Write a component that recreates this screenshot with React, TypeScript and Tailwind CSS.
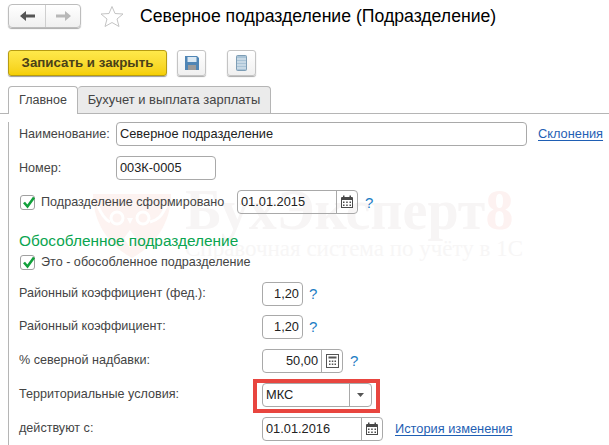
import type { ReactNode } from "react";

const border = "border border-[#a9a9a9] rounded-[4px]";

function Help({ className = "" }: { className?: string }) {
  return <span className={`text-[#1c7dc4] text-[15px] leading-none ${className}`}>?</span>;
}

function CalendarIcon() {
  return (
    <svg width="14" height="14" viewBox="0 0 14 14">
      <path d="M2 2h10a1 1 0 0 1 1 1v10H1V3a1 1 0 0 1 1-1z" fill="#4a4a4a" />
      <rect x="3" y="0.5" width="1.5" height="3" fill="#4a4a4a" />
      <rect x="9.5" y="0.5" width="1.5" height="3" fill="#4a4a4a" />
      <rect x="2" y="5" width="10" height="7" fill="#fff" />
      <path d="M3 6.5h1.5V8H3zM6.2 6.5h1.5V8H6.2zM9.5 6.5H11V8H9.5zM3 9.5h1.5V11H3zM6.2 9.5h1.5V11H6.2zM9.5 9.5H11V11H9.5z" fill="#4a4a4a" />
    </svg>
  );
}

function CalcIcon() {
  return (
    <svg width="13" height="14" viewBox="0 0 13 14">
      <rect x="0.5" y="0.5" width="12" height="13" fill="#fff" stroke="#555" />
      <rect x="2.5" y="2.5" width="8" height="2" fill="#555" />
      <path d="M3 6.5h1.5V8H3zM5.8 6.5h1.5V8H5.8zM8.5 6.5H10V8H8.5zM3 9.5h1.5V11H3zM5.8 9.5h1.5V11H5.8zM8.5 9.5H10V11H8.5z" fill="#555" />
    </svg>
  );
}

function Check() {
  return (
    <span className="w-[15px] h-[15px] border border-[#a0a0a0] rounded-[3px] bg-white/70 shrink-0 relative">
      <svg width="17" height="15" viewBox="0 0 17 15" className="absolute left-0 -top-[1px]">
        <path d="M3 7.5 L6.5 11.5 L13 2.5" fill="none" stroke="#12a03c" strokeWidth="2.6" />
      </svg>
    </span>
  );
}

function Field({ w, value, right, btn, children }: { w: string; value: string; right?: boolean; btn?: string; children?: ReactNode }) {
  return (
    <div className={`${w} ${border} h-[24px] flex text-[12.8px] text-[#222] shrink-0`}>
      <span className={`flex-1 px-[3px] leading-[22px] ${right ? "text-right" : ""}`}>{value}</span>
      {children && (
        <span className={`${btn} border-l border-[#a9a9a9] flex items-center justify-center`}>{children}</span>
      )}
    </div>
  );
}

function Row({ label, labelW, mt, children }: { label: string; labelW: string; mt: string; children: ReactNode }) {
  return (
    <div className={`flex items-center ${mt}`}>
      <span className={`${labelW} text-[#444]`}>{label}</span>
      {children}
    </div>
  );
}

export default function App() {
  return (
    <div className="w-[609px] h-[445px] overflow-hidden bg-white relative text-[12.6px] font-['Liberation_Sans',Arial,sans-serif]">
      {/* watermark */}
      <div className="absolute left-[92px] top-[192px] flex gap-[13px] pointer-events-none">
        <svg width="80" height="67" viewBox="0 0 80 67">
          <path d="M1 2 H79 C79 32 62 54 40 66 C18 54 1 32 1 2z" fill="#fdf3f1" />
          <circle cx="25" cy="26" r="6" fill="none" stroke="#fff" strokeWidth="3" />
          <circle cx="51" cy="26" r="6" fill="none" stroke="#fff" strokeWidth="3" />
          <path d="M6 14 C10 24 14 28 18 30 M74 14 C70 24 66 28 58 30" fill="none" stroke="#fff" strokeWidth="3" />
          <path d="M35 26 L38 32 L41 26z" fill="#fff" />
          <path d="M38 38 L32 46 L38 56 L44 46z" fill="#fff" />
        </svg>
        <div className="font-['Liberation_Serif',serif] -mt-[7px]">
          <div className="text-[56px] font-bold leading-[50px] text-[#f7f5f5] whitespace-nowrap">
            БухЭксперт<span className="text-[#fdf2f1]">8</span>
          </div>
          <div className="text-[23px] leading-[24px] text-[#f7f6f6] whitespace-nowrap mt-[2px]">Справочная система по учёту в 1С</div>
        </div>
      </div>

      <div className="relative">
        {/* header */}
        <div className="flex items-center h-[24px] mt-[4px] ml-[8px] absolute top-0 left-0">
          <div className="w-[73px] h-[24px] flex border border-[#bdbdbd] rounded-[4px] bg-gradient-to-b from-white to-[#f0f0f0] shadow-[0_1px_1px_#aaa]">
            <span className="w-[37px] border-r border-[#cfcfcf] flex items-center justify-center">
              <svg width="15" height="12" viewBox="0 0 15 12"><path d="M0 6 L6 1 V4.5 H15 V7.5 H6 V11z" fill="#555" /></svg>
            </span>
            <span className="flex-1 flex items-center justify-center">
              <svg width="15" height="12" viewBox="0 0 15 12"><path d="M15 6 L9 1 V4.5 H0 V7.5 H9 V11z" fill="#b8b8b8" /></svg>
            </span>
          </div>
          <svg width="24" height="22" viewBox="0 0 24 22" className="ml-[19px]">
            <path d="M12 1.5 L15 8.5 L23 9 L17 14 L19 21.5 L12 17.5 L5 21.5 L7 14 L1 9 L9 8.5z" fill="#fff" stroke="#c4c4c4" />
          </svg>
          <span className="ml-[16px] text-[17.65px] text-black whitespace-nowrap">Северное подразделение (Подразделение)</span>
        </div>

        {/* toolbar */}
        <div className="flex items-center pt-[50px] pl-[8px]">
          <button className="w-[159px] h-[26px] rounded-[3px] border border-[#b79c12] bg-gradient-to-b from-[#ffe94a] to-[#f5cf00] text-[13.3px] font-bold text-[#4a4118] shadow-[0_1px_1px_#999]">
            Записать и закрыть
          </button>
          <span className="ml-[10px] w-[29px] h-[26px] rounded-[3px] border border-[#c4c4c4] bg-gradient-to-b from-white to-[#f0f0f0] shadow-[0_1px_1px_#aaa] flex items-center justify-center">
            <svg width="14" height="14" viewBox="0 0 14 14">
              <path d="M0 0h12l2 2v12H0z" fill="#4f85b5" />
              <rect x="2.5" y="1" width="9" height="5" fill="#dbe8f2" />
              <rect x="3" y="9" width="8" height="5" fill="#9a9a9a" />
            </svg>
          </span>
          <span className="ml-[21px] w-[29px] h-[26px] rounded-[3px] border border-[#c4c4c4] bg-gradient-to-b from-white to-[#f0f0f0] shadow-[0_1px_1px_#aaa] flex items-center justify-center">
            <svg width="11" height="16" viewBox="0 0 11 16">
              <rect x="0.5" y="0.5" width="10" height="15" rx="1" fill="#a9c3d6" stroke="#7d9db5" />
              <path d="M1 4h9M1 7h9M1 10h9M1 13h9" stroke="#e6eef4" />
            </svg>
          </span>
        </div>

        {/* tabs */}
        <div className="flex mt-[10px] pl-[8px] h-[28px] border-b border-[#b5b5b5] relative">
          <span className="w-[70px] h-[28px] border border-b-0 border-[#b5b5b5] rounded-t-[4px] bg-white text-[12.5px] text-[#444] flex items-center justify-center relative z-10">Главное</span>
          <span className="w-[193px] h-[27px] border border-l-0 border-b-0 border-[#b5b5b5] rounded-t-[4px] bg-[#ebebeb] text-[12.95px] text-[#444] flex items-center justify-center">Бухучет и выплата зарплаты</span>
        </div>

        {/* form */}
        <div className="ml-[8px] border-l border-[#b5b5b5] pl-[10px] h-[332px]">
          <Row label="Наименование:" labelW="w-[97px]" mt="mt-[8px]">
            <Field w="w-[411px]" value="Северное подразделение" />
            <a className="ml-[11px] text-[12.8px] text-[#1f5fb4] underline underline-offset-2">Склонения</a>
          </Row>
          <Row label="Номер:" labelW="w-[97px]" mt="mt-[10px]">
            <Field w="w-[100px]" value="003К-0005" />
          </Row>
          <div className="flex items-center mt-[10px]">
            <span className="ml-[1px] flex"><Check /></span>
            <span className="ml-[6px] w-[196px] text-[#444] whitespace-nowrap">Подразделение сформировано</span>
            <Field w="w-[121px]" value="01.01.2015" btn="w-[21px]"><CalendarIcon /></Field>
            <Help className="ml-[7px]" />
          </div>
          <div className="mt-[18px] text-[15.4px] leading-[18px] text-[#0aa550]">Обособленное подразделение</div>
          <div className="flex items-center mt-[3px]">
            <span className="ml-[1px] flex"><Check /></span>
            <span className="ml-[6px] text-[#444]">Это - обособленное подразделение</span>
          </div>
          <Row label="Районный коэффициент (фед.):" labelW="w-[243px]" mt="mt-[10px]">
            <Field w="w-[41px]" value="1,20" right />
            <Help className="ml-[6px]" />
          </Row>
          <Row label="Районный коэффициент:" labelW="w-[243px]" mt="mt-[9px]">
            <Field w="w-[41px]" value="1,20" right />
            <Help className="ml-[6px]" />
          </Row>
          <Row label="% северной надбавки:" labelW="w-[243px]" mt="mt-[10px]">
            <Field w="w-[81px]" value="50,00" right btn="w-[21px]"><CalcIcon /></Field>
            <Help className="ml-[7px]" />
          </Row>
          <Row label="Территориальные условия:" labelW="w-[243px]" mt="mt-[10px]">
            <div className="relative">
              <Field w="w-[110px]" value="МКС" btn="w-[22px]">
                <svg width="7" height="4" viewBox="0 0 7 4"><path d="M0 0h7L3.5 4z" fill="#555" /></svg>
              </Field>
              {/* red highlight */}
              <span className="absolute -left-[9px] -top-[4px] w-[127px] h-[34px] border-4 border-[#e8453f]" />
            </div>
          </Row>
          <Row label="действуют с:" labelW="w-[243px]" mt="mt-[10px]">
            <Field w="w-[121px]" value="01.01.2016" btn="w-[21px]"><CalendarIcon /></Field>
            <a className="ml-[12px] text-[12.8px] text-[#1f5fb4] underline underline-offset-2">История изменения</a>
          </Row>
        </div>
      </div>
    </div>
  );
}
